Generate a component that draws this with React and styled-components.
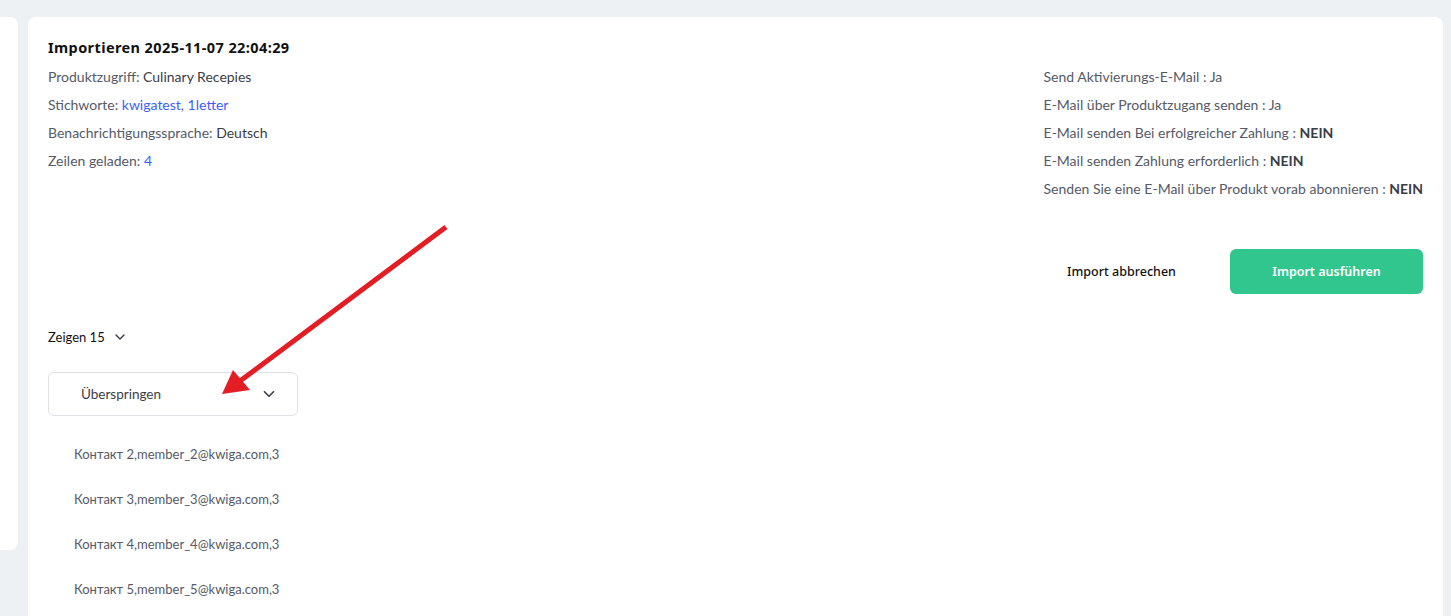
import React from "react";
import styled, { createGlobalStyle } from "styled-components";

const Global = createGlobalStyle`
  html, body {
    margin: 0;
    padding: 0;
    background: #eef1f4;
    overflow: hidden;
  }
  body {
    font-family: Lato, "Noto Sans", sans-serif;
  }
`;

const Page = styled.div`
  position: relative;
  display: flex;
  gap: 10px;
  padding: 17px 8px 0 0;
  height: 616px;
  box-sizing: border-box;
`;

const SidePanel = styled.div`
  width: 18px;
  height: 533px;
  background: #fff;
  border-radius: 0 8px 8px 0;
  flex-shrink: 0;
`;

const Card = styled.div`
  flex: 1;
  background: #fff;
  border-radius: 8px 8px 0 0;
  padding: 20px 20px 0 20px;
  box-sizing: border-box;
  overflow: hidden;
`;

const Header = styled.div`
  display: flex;
  justify-content: space-between;
`;

const LeftInfo = styled.div`
  display: flex;
  flex-direction: column;
`;

const Title = styled.h1`
  margin: 0 0 6px 0;
  font-family: "Noto Sans", "Open Sans", sans-serif;
  font-size: 14.5px;
  font-weight: 700;
  line-height: 20px;
  color: #111;
  letter-spacing: 0.4px;
`;

const Line = styled.div`
  font-size: 14px;
  line-height: 28px;
  height: ${({ tall }) => (tall ? "29px" : "28px")};
  color: #555a66;
  white-space: nowrap;
`;

const Value = styled.span`
  color: ${({ link }) => (link ? "#3c5efb" : "#3a3d46")};
  font-weight: ${({ bold }) => (bold ? 700 : 400)};
`;

const RightInfo = styled.div`
  display: flex;
  flex-direction: column;
  align-items: flex-end;
  padding-top: 26px;
`;

const Settings = styled.div`
  display: flex;
  flex-direction: column;
`;

const Actions = styled.div`
  display: flex;
  justify-content: flex-end;
  gap: 12px;
  margin-top: 45px;
`;

const Button = styled.button`
  width: 193px;
  height: 45px;
  border: none;
  border-radius: 6px;
  font-family: "Noto Sans", "Open Sans", sans-serif;
  font-size: 12.5px;
  font-weight: ${({ primary }) => (primary ? 600 : 500)};
  background: ${({ primary }) => (primary ? "#32c68f" : "transparent")};
  color: ${({ primary }) => (primary ? "#fff" : "#111")};
  cursor: pointer;
`;

const Zeigen = styled.div`
  display: flex;
  align-items: center;
  gap: 8px;
  margin-top: 33px;
  font-size: 13px;
  line-height: 20px;
  color: #111;
`;

const Select = styled.div`
  width: 250px;
  height: 44px;
  margin-top: 25px;
  box-sizing: border-box;
  border: 1px solid #dedfe9;
  border-radius: 6px;
  display: flex;
  align-items: center;
  justify-content: space-between;
  padding: 0 20px 0 32px;
  font-size: 13.5px;
  color: #3a3d46;
`;

const Rows = styled.div`
  width: 232px;
  box-sizing: border-box;
  margin-top: 16px;
  padding-left: 26px;
  overflow: hidden;
`;

const Row = styled.div`
  height: 45px;
  line-height: 45px;
  font-size: 13px;
  color: #555a66;
  white-space: nowrap;
`;

const ArrowOverlay = styled.svg`
  position: absolute;
  left: 0;
  top: 0;
  pointer-events: none;
`;

const Chevron = ({ size = 14, color = "#3a3d46" }) => (
  <svg width={size} height={size} viewBox="0 0 14 14" fill="none">
    <path d="M3 5l4 4 4-4" stroke={color} strokeWidth="1.4" strokeLinecap="round" strokeLinejoin="round" />
  </svg>
);

const rows = [2, 3, 4, 5];

export default function App() {
  return (
    <>
      <Global />
      <Page>
        <SidePanel />
        <Card>
          <Header>
            <LeftInfo>
              <Title>Importieren 2025-11-07 22:04:29</Title>
              <Line>
                Produktzugriff: <Value>Culinary Recepies</Value>
              </Line>
              <Line>
                Stichworte: <Value link>kwigatest</Value>, <Value link>1letter</Value>
              </Line>
              <Line>
                Benachrichtigungssprache: <Value>Deutsch</Value>
              </Line>
              <Line>
                Zeilen geladen: <Value link>4</Value>
              </Line>
            </LeftInfo>
            <RightInfo>
              <Settings>
                <Line>Send Aktivierungs-E-Mail : Ja</Line>
                <Line>E-Mail über Produktzugang senden : Ja</Line>
                <Line>
                  E-Mail senden Bei erfolgreicher Zahlung : <Value bold>NEIN</Value>
                </Line>
                <Line>
                  E-Mail senden Zahlung erforderlich : <Value bold>NEIN</Value>
                </Line>
                <Line tall>
                  Senden Sie eine E-Mail über Produkt vorab abonnieren : <Value bold>NEIN</Value>
                </Line>
              </Settings>
              <Actions>
                <Button>Import abbrechen</Button>
                <Button primary>Import ausführen</Button>
              </Actions>
            </RightInfo>
          </Header>
          <Zeigen>
            Zeigen 15 <Chevron />
          </Zeigen>
          <Select>
            Überspringen
            <Chevron size={16} />
          </Select>
          <Rows>
            {rows.map((n) => (
              <Row key={n}>
                Контакт {n},member_{n}@kwiga.com,380000000{n}
              </Row>
            ))}
          </Rows>
        </Card>
        <ArrowOverlay width="1451" height="616">
          <line x1="446" y1="227" x2="240" y2="381" stroke="#e31d23" strokeWidth="5" />
          <polygon points="222,394 233,370 250,390" fill="#e31d23" />
        </ArrowOverlay>
      </Page>
    </>
  );
}
